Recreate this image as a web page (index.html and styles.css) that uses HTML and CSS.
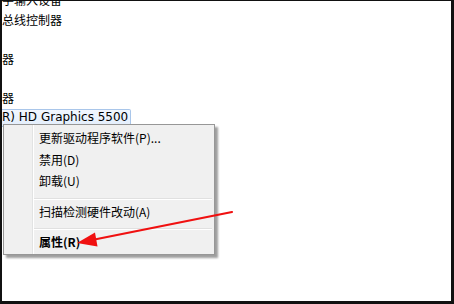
FILE: index.html
```html
<!DOCTYPE html>
<html>
<head>
<meta charset="utf-8">
<link rel="stylesheet" href="styles.css">
</head>
<body>
<div class="frame">
  <div class="tree">
    <div class="row cut">学输入设备</div>
    <div class="row">总线控制器</div>
    <div class="row"></div>
    <div class="row">器</div>
    <div class="row"></div>
    <div class="row">器</div>
    <div class="row"><span class="sel">R) HD Graphics 5500</span></div>
  </div>

  <div class="menu">
    <div class="item">更新驱动程序软件(P)...</div>
    <div class="item">禁用(D)</div>
    <div class="item">卸载(U)</div>
    <div class="sep"></div>
    <div class="item">扫描检测硬件改动(A)</div>
    <div class="sep"></div>
    <div class="item bold">属性(R)</div>
  </div>

  <svg class="arrow" width="454" height="304" viewBox="0 0 454 304">
    <line x1="232" y1="212" x2="92" y2="240" stroke="#f01010" stroke-width="2.2" stroke-linecap="round"/>
    <polygon points="77,243 95,232.5 97.5,246.5" fill="#f01010"/>
  </svg>
</div>
</body>
</html>
```

FILE: styles.css
```css
html, body {
  margin: 0;
  padding: 0;
  background: #fff;
}
.frame {
  position: relative;
  width: 454px;
  height: 304px;
  box-sizing: border-box;
  border-top: 1px solid #111;
  border-left: 2px solid #111;
  border-right: 3px solid #111;
  border-bottom: 3px solid #111;
  overflow: hidden;
  font-family: "Noto Sans CJK SC", "Liberation Sans", sans-serif;
  font-size: 12px;
  color: #000;
}
.tree {
  margin-top: -11px;
}
.row {
  height: 19.5px;
  line-height: 19.5px;
  white-space: nowrap;
}
.sel {
  display: inline-block;
  height: 16px;
  line-height: 15px;
  padding: 0 2px 0 0;
  margin-top: 2px;
  font-family: "DejaVu Sans", "Noto Sans CJK SC", sans-serif;
  border: 1px solid #a9c6ea;
  border-left: none;
  border-radius: 0 2px 2px 0;
  background: linear-gradient(#f2f7fe, #e3eefc);
  vertical-align: top;
}
.menu {
  position: absolute;
  left: 1px;
  top: 123px;
  width: 208px;
  padding: 2px 1px 1.5px 1px;
  border: 1px solid #979797;
  background:
    linear-gradient(to right, transparent 28px, #e2e3e3 28px, #e2e3e3 29px, #ffffff 29px, #ffffff 30px, transparent 30px),
    #f0f0f0;
  box-shadow: 3px 3px 2px rgba(0, 0, 0, 0.38);
}
.item {
  height: 21.5px;
  line-height: 21.5px;
  padding-left: 34px;
  white-space: nowrap;
}
.bold {
  font-weight: bold;
}
.sep {
  height: 0;
  margin: 6px 1px 1px 29px;
  border-top: 1px solid #e0e0e0;
  border-bottom: 1px solid #ffffff;
}
.arrow {
  position: absolute;
  left: -2px;
  top: -1px;
}
```
